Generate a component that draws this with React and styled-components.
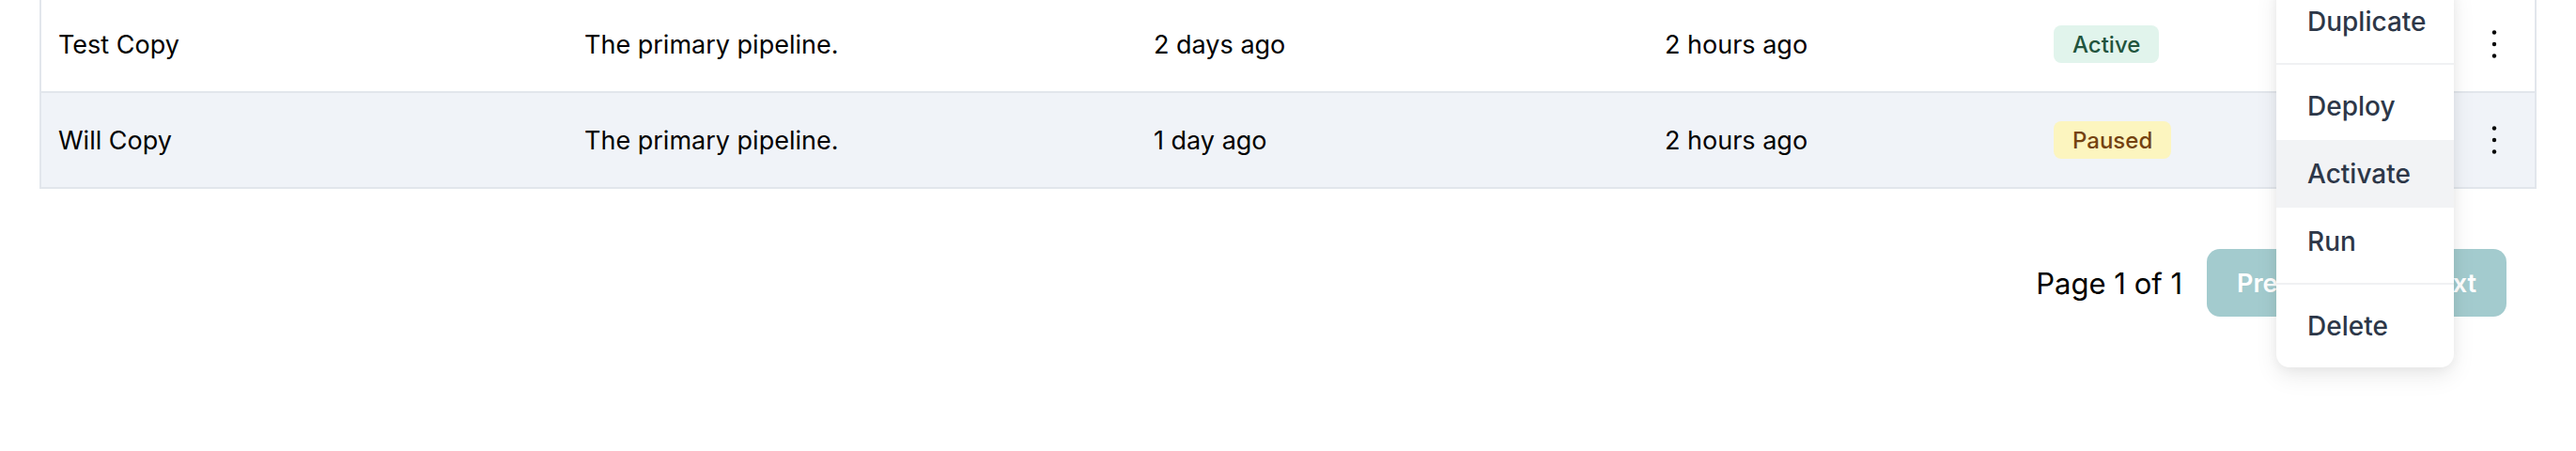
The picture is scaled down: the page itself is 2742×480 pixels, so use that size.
import React from "react";
import styled, { createGlobalStyle } from "styled-components";

const Global = createGlobalStyle`
  html, body { margin: 0; padding: 0; background: #ffffff; }
  body { font-family: Inter, "Noto Sans", "Liberation Sans", sans-serif; overflow: hidden; }
  * { box-sizing: border-box; }
`;

const Page = styled.div`
  width: 2742px;
  height: 480px;
  padding: 0 42px;
  overflow: hidden;
`;

const Table = styled.div`
  margin-top: -5px;
  border: 2px solid #e2e6ec;
  display: flex;
  flex-direction: column;
`;

const Row = styled.div`
  display: grid;
  grid-template-columns: 560px 606px 544px 414px 1fr 86px;
  height: ${(p) => (p.$last ? 100 : 102)}px;
  background: ${(p) => (p.$striped ? "#f0f3f8" : "#ffffff")};
  border-bottom: ${(p) => (p.$last ? "none" : "2px solid #e2e6ec")};
`;

const Cell = styled.div`
  display: flex;
  align-items: center;
  padding: 0 18px;
  font-size: 27px;
  color: #000000;
  white-space: nowrap;
`;

const ActionCell = styled.div`
  position: relative;
  display: flex;
  align-items: center;
  justify-content: center;
`;

const Badge = styled.span`
  display: inline-flex;
  align-items: center;
  height: 40px;
  padding: 0 20px;
  border-radius: 8px;
  font-size: 24px;
  font-weight: 500;
  background: ${(p) => (p.$tone === "green" ? "#e1f4ec" : "#fcf5bf")};
  color: ${(p) => (p.$tone === "green" ? "#22543d" : "#744210")};
`;

const Kebab = styled.button`
  border: none;
  background: transparent;
  padding: 0;
  display: flex;
  align-items: center;
  justify-content: center;
  width: 40px;
  height: 48px;
`;

const Menu = styled.div`
  position: absolute;
  top: -18px;
  right: 100%;
  width: 189px;
  padding: 8px 0;
  background: #ffffff;
  border-radius: 14px;
  box-shadow: 0 10px 24px rgba(0, 0, 0, 0.08), 0 2px 12px rgba(0, 0, 0, 0.05);
  z-index: 10;
`;

const MenuItem = styled.div`
  height: 72px;
  line-height: 72px;
  padding: 0 33px;
  font-size: 28px;
  font-weight: 500;
  color: #2d3748;
  background: ${(p) => (p.$active ? "#f2f3f5" : "transparent")};
  white-space: nowrap;
`;

const MenuDivider = styled.div`
  height: 2px;
  margin: 8px 0;
  background: #f0f1f3;
`;

const Pagination = styled.div`
  margin-top: 64px;
  display: flex;
  align-items: center;
  justify-content: flex-end;
  padding-right: 32px;
`;

const PageLabel = styled.span`
  font-size: 31px;
  color: #000000;
  margin-right: 26px;
`;

const PageButton = styled.button`
  height: 72px;
  padding: 0 32px;
  border: none;
  border-radius: 14px;
  background: #a3cbce;
  color: #ffffff;
  font-family: inherit;
  font-size: 27px;
  font-weight: 600;
  & + & { margin-left: 16px; }
`;

const Dots = () => (
  <svg width="6" height="32" viewBox="0 0 6 32">
    <circle cx="3" cy="3.5" r="2.2" fill="#000" />
    <circle cx="3" cy="16" r="2.2" fill="#000" />
    <circle cx="3" cy="28.5" r="2.2" fill="#000" />
  </svg>
);

const rows = [
  { name: "Test Copy", desc: "The primary pipeline.", created: "2 days ago", updated: "2 hours ago", status: "Active", tone: "green" },
  { name: "Will Copy", desc: "The primary pipeline.", created: "1 day ago", updated: "2 hours ago", status: "Paused", tone: "yellow" },
];

export default function App() {
  return (
    <>
      <Global />
      <Page>
        <Table>
          {rows.map((r, i) => (
            <Row key={r.name} $striped={i % 2 === 1} $last={i === rows.length - 1}>
              <Cell>{r.name}</Cell>
              <Cell>{r.desc}</Cell>
              <Cell>{r.created}</Cell>
              <Cell>{r.updated}</Cell>
              <Cell>
                <Badge $tone={r.tone}>{r.status}</Badge>
              </Cell>
              <ActionCell>
                <Kebab aria-label="Actions">
                  <Dots />
                </Kebab>
                {i === 0 && (
                  <Menu>
                    <MenuItem>Duplicate</MenuItem>
                    <MenuDivider />
                    <MenuItem>Deploy</MenuItem>
                    <MenuItem $active>Activate</MenuItem>
                    <MenuItem>Run</MenuItem>
                    <MenuDivider />
                    <MenuItem>Delete</MenuItem>
                  </Menu>
                )}
              </ActionCell>
            </Row>
          ))}
        </Table>
        <Pagination>
          <PageLabel>Page 1 of 1</PageLabel>
          <PageButton disabled>Previous</PageButton>
          <PageButton disabled>Next</PageButton>
        </Pagination>
      </Page>
    </>
  );
}
